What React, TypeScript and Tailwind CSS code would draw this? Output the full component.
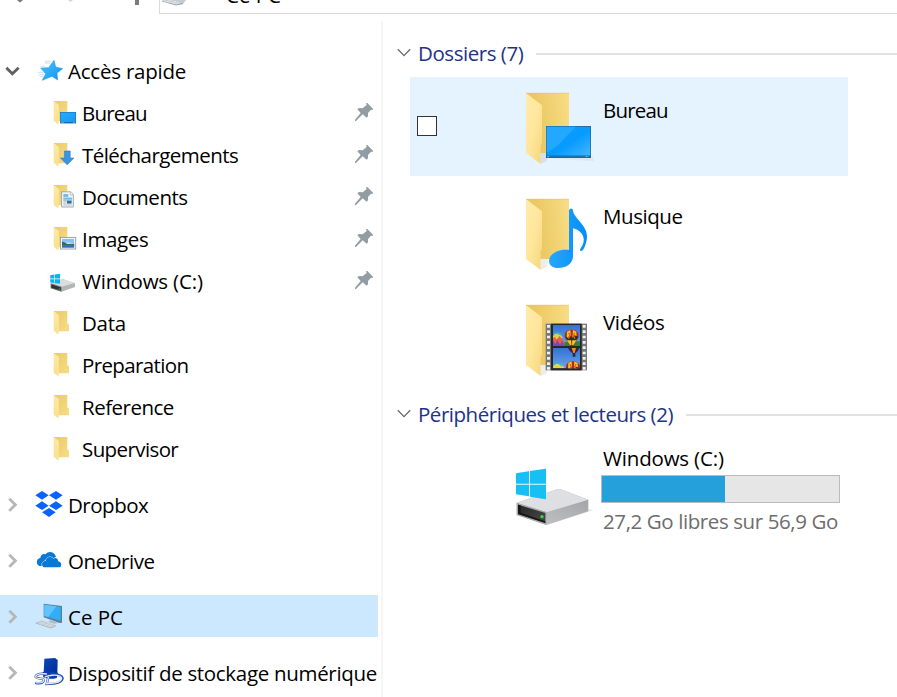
import type { ReactNode } from "react";

function ChevronRight() {
  return (
    <svg className="h-5 w-5 shrink-0" viewBox="9 46 60 60" fill="none">
      <path d="M28 60 46 78 28 96" stroke="#b6b6b6" strokeWidth="8.5" />
    </svg>
  );
}

function ChevronDown() {
  return (
    <svg className="h-5 w-5 shrink-0" viewBox="9 180 60 60" fill="none">
      <path d="M19 203 37 221 56 203" stroke="#606060" strokeWidth="8.5" />
    </svg>
  );
}

function Pin() {
  return (
    <svg className="h-5 w-5 shrink-0" viewBox="42 246 60 60" fill="#919ca3">
      <path d="M78 250 82 249 99 266 98 270 93 269 84 279 84 289 80 293 68 283 48 303 45 303 45 299 62 279 52 268 57 264 68 265 80 255Z" />
    </svg>
  );
}

function SmallFolder({ children }: { children?: ReactNode }) {
  return (
    <svg className="h-7 w-7 shrink-0" viewBox="0 0 28 28">
      <defs>
        <linearGradient id="sb" x1="0" y1="0" x2="1" y2="1">
          <stop offset="0" stopColor="#eaca69" />
          <stop offset="1" stopColor="#f8dc85" />
        </linearGradient>
        <linearGradient id="sf" x1="0" y1="0" x2="0" y2="1">
          <stop offset="0" stopColor="#fee9a5" />
          <stop offset="1" stopColor="#fadf8c" />
        </linearGradient>
        <linearGradient id="sky" x1="0" y1="0" x2="1" y2="1">
          <stop offset="0" stopColor="#29aafc" />
          <stop offset="1" stopColor="#159bf5" />
        </linearGradient>
      </defs>
      <path d={children ? "M3.7 3H17.3V23.3H7Z" : "M3.7 3H17.3V15.3L19 16.5V23.3H7Z"} fill="url(#sb)" />
      <path d="M3.7 3 8.9 7V22L8.3 26.6 3.7 22.8Z" fill="url(#sf)" />
      {children}
    </svg>
  );
}

const desktopGlyph = (
  <g>
    <rect x="10" y="14" width="16" height="11.4" fill="#1868a4" />
    <rect x="10.5" y="14.5" width="15" height="9.5" fill="url(#sky)" />
    <path d="M11 24.6H14M23 24.6H25" stroke="#8ed1ff" strokeWidth=".5" />
  </g>
);

const downloadGlyph = (
  <path d="M14.4 11H20.2V18H23.9L17.2 24.8 10.5 18H14.4Z" fill="#3994e4" stroke="#2a7cc9" strokeWidth=".6" />
);

const documentGlyph = (
  <g>
    <path d="M11.6 9.8H20.5L23.3 12.5V25H11.6Z" fill="#f5f8fa" stroke="#8c969c" strokeWidth=".8" />
    <path d="M20.3 9.8V12.8H23.3" fill="#fff" stroke="#8c969c" strokeWidth=".6" />
    <rect x="13.3" y="12" width="5" height="3" fill="#70bcec" />
    <path d="M13.3 16.2H22M13.3 18H22" stroke="#3d9cd9" strokeWidth="1" />
    <rect x="17" y="18.8" width="4.6" height="2.8" fill="#376b8f" />
    <path d="M13.3 19.7H16.4M13.3 21.2H16.4M13.3 23H21.8" stroke="#9aa5aa" strokeWidth=".7" />
  </g>
);

const imageGlyph = (
  <g>
    <rect x="10.5" y="13.4" width="15.2" height="11.6" fill="#fff" stroke="#949a9f" strokeWidth=".9" />
    <rect x="12" y="14.8" width="12.2" height="8.8" fill="#8bc1f4" />
    <path d="M12 19Q17 18 24.2 19.5V21.3H12Z" fill="#d2e9fb" />
    <path d="M12 17.6Q15 18.3 17.5 20L24.2 19.8V21.8H12Z" fill="#356c55" />
    <rect x="12" y="21.4" width="12.2" height="2.2" fill="#2a70b8" />
  </g>
);

function SmallDrive() {
  return (
    <svg className="h-7 w-7 shrink-0" viewBox="0 0 28 28">
      <path d="M.7 17.5 12.5 13 25 17.3V21L11.5 25.8.7 22.3Z" fill="#b4b5b8" />
      <path d="M.7 17.3 12.5 13 25 17 11.5 20.8Z" fill="#dcdde0" />
      <path d="M.7 17.3 11.5 20.8V25.8L.7 22.3Z" fill="#777" />
      <path d="M1.4 18.6 10.8 21.6V24.5L1.4 21.8Z" fill="#303030" />
      <circle cx="9.2" cy="23" r=".7" fill="#35c23a" />
      <path d="M.2 9.2 4.4 8.6V12.6H.2ZM5 8.5 10 7.8V12.6H5ZM.2 13.2H4.4V17.1L.2 16.5ZM5 13.2H10V17.8L5 17.2Z" fill="#00b7f1" />
    </svg>
  );
}

function Star() {
  return (
    <svg className="h-[30px] w-[30px] shrink-0" viewBox="102 165 90 90">
      <defs>
        <linearGradient id="st" x1="0" y1="0" x2="1" y2="1">
          <stop offset="0" stopColor="#52c0f8" />
          <stop offset="1" stopColor="#0996f5" />
        </linearGradient>
      </defs>
      <path d="M134 184H154M134 189H150M113 218H134M116 224H132M119 229H130M122 199H134" stroke="#a5d6f5" strokeWidth="2" />
      <path d="M162 181 167 201 188 206 171 219 173 240 156 229 127 241 137 221 122 204 146 203Z" fill="url(#st)" stroke="#168fdc" strokeWidth="1.5" />
    </svg>
  );
}

function Dropbox() {
  return (
    <svg className="h-[30px] w-[30px] shrink-0" viewBox="102 27 90 90" fill="#0864fb">
      <path d="M126 33 146 46 126 59 106 46ZM168 33 188 46 168 59 147 46ZM126 64 146 77 126 90 106 77ZM168 64 188 77 168 90 147 77ZM147 84 167 97 147 111 126 97Z" />
    </svg>
  );
}

function OneDrive() {
  return (
    <svg className="h-[30px] w-[30px] shrink-0" viewBox="102 195 90 90" fill="#0878d6">
      <path d="M122 258C113 258 109 250 111 243 112 238 116 235 121 234 121 226 129 220 137 223 143 214 158 213 165 224L168 230 145 250Z" />
      <path d="M134 262C126 262 124 251 129 246 131 243 134 243 137 243 138 233 151 226 160 236 168 231 175 237 174 244 183 245 186 253 182 260L178 262Z" stroke="#fff" strokeWidth="3" paintOrder="stroke" />
    </svg>
  );
}

function Computer() {
  return (
    <svg className="h-[30px] w-[30px] shrink-0" viewBox="102 63 90 90">
      <path d="M131 71 186 78V128L179 129 131 112Z" fill="#5c7f99" />
      <path d="M133 74 182 81V122L133 108Z" fill="#30aefa" />
      <path d="M133 74 169 79 145 111 133 108Z" fill="#62c3fc" />
      <path d="M150 121 166 125 176 129 162 131 145 125Z" fill="#aeb9c1" />
      <path d="M106 128 125 121 168 136 153 144Z" fill="#c2c9ce" />
      <path d="M107 129 153 144 168 137" fill="none" stroke="#94a0a8" strokeWidth="2" />
      <path d="M113 129 155 142M119 126 160 139M121 134 135 125M133 138 147 129M145 141 158 132" stroke="#eef3f6" strokeWidth="1" />
    </svg>
  );
}

function StorageDevice() {
  return (
    <svg className="h-[30px] w-[30px] shrink-0" viewBox="102 231 90 90">
      <defs>
        <linearGradient id="sd" x1="0" y1="0" x2="1" y2="1">
          <stop offset="0" stopColor="#0b47b6" />
          <stop offset="1" stopColor="#03299a" />
        </linearGradient>
      </defs>
      <path d="M133 236 165 234 173 240 172 280 157 284 131 278Z" fill="url(#sd)" />
      <path d="M128 276Q149 270 175 279L170 294Q151 300 130 292Z" fill="#0b3eaa" />
      <g fill="none" strokeLinecap="round">
        <path d="M139 282C119 278 103 285 108 292 114 299 133 292 131 302 129 311 115 310 108 309M145 292 140 312 161 311C184 309 196 294 181 287 168 281 145 284 135 291" stroke="#214eaf" strokeWidth="7" />
        <path d="M139 282C119 278 103 285 108 292 114 299 133 292 131 302 129 309 115 309 108 308M145 292 140 311 161 309C182 307 192 294 179 288 168 283 145 286 135 291" stroke="#e5edf8" strokeWidth="4" />
      </g>
    </svg>
  );
}

function LargeFolder({ children }: { children: ReactNode }) {
  return (
    <svg className="h-[76px] w-[76px] shrink-0" viewBox="45 30 228 228">
      <defs>
        <linearGradient id="lb" x1="0" y1="0.2" x2="1" y2="0">
          <stop offset="0.2" stopColor="#eac862" />
          <stop offset="1" stopColor="#f9dd86" />
        </linearGradient>
        <linearGradient id="lf" x1="0" y1="0" x2="1" y2="1">
          <stop offset="0" stopColor="#ffebac" />
          <stop offset="0.5" stopColor="#ffe69b" />
          <stop offset="1" stopColor="#f4d67d" />
        </linearGradient>
        <linearGradient id="screen" x1="0" y1="0" x2="1" y2="1">
          <stop offset="0" stopColor="#0e9cff" />
          <stop offset="0.55" stopColor="#079bff" />
          <stop offset="1" stopColor="#42b7ff" />
        </linearGradient>
        <linearGradient id="note" x1="0" y1="0" x2="1" y2="0">
          <stop offset="0" stopColor="#27a7fc" />
          <stop offset="1" stopColor="#008ff8" />
        </linearGradient>
        <linearGradient id="frame" x1="0" y1="0" x2="0" y2="1">
          <stop offset="0" stopColor="#3372d5" />
          <stop offset="1" stopColor="#6ba3ec" />
        </linearGradient>
      </defs>
      <path d="M106 252 125 244 130 219H107Z" fill="#000" opacity=".07" />
      <path d="M63 39H192V219H100Z" fill="url(#lb)" />
      <path d="M63 39 111 76V188L107 197V252L63 219Z" fill="url(#lf)" />
      <path d="M63 39.5H192" stroke="#dfbd60" strokeWidth="1.5" />
      {children}
    </svg>
  );
}

const bigScreen = (
  <g>
    <path d="M132 235H258L266 227V244Z" fill="#000" opacity=".04" />
    <rect x="123" y="138" width="135" height="96" fill="#245f88" />
    <rect x="125" y="140" width="131" height="87" fill="url(#screen)" />
    <path d="M125 140H212L157 197 125 218Z" fill="#22a9ff" />
    <rect x="125" y="227" width="131" height="5" fill="#1577b5" />
    <path d="M127 230H132M242 230H246M248 230H250" stroke="#b8e2ff" strokeWidth="2" />
  </g>
);

const bigNote = (
  <g>
    <path d="M192 72Q197 64 203 70C205 98 246 116 246 151 246 169 237 193 230 195 224 197 224 190 228 185 245 160 235 135 204 127V213C202 235 181 246 160 246 142 246 132 237 132 224 133 202 163 187 192 192Z" fill="url(#note)" />
    <path d="M193 192Q197 193 193 198" fill="none" stroke="#0077da" strokeWidth="2" />
  </g>
);

function Balloon({ x, y }: { x: number; y: number }) {
  return (
    <g transform={`translate(${x} ${y})`}>
      <path d="M-21 16C-21-6 21-6 21 16 21 30 8 39 5 45H-5C-8 39-21 30-21 16Z" fill="#b72a20" />
      <path d="M-14 5-4 0-1 45-5 45-15 30ZM4 0 14 5 15 30 5 45 1 45Z" fill="#f1c72f" />
      <path d="M-20 17-12 23-5 16 2 23 9 16 20 20 14 31-14 31Z" fill="#322d29" />
      <path d="M-9 8-5 17-10 26M9 8 5 17 10 26" fill="none" stroke="#e85f23" strokeWidth="4" />
      <path d="M-5 46H5V52H-5Z" fill="#693721" />
    </g>
  );
}

const filmHoles = [99, 115, 131, 147, 163, 179, 195, 211, 225];

const bigFilm = (
  <g>
    <rect x="122" y="95" width="124" height="140" fill="#787878" />
    <rect x="138" y="95" width="92" height="140" fill="#272727" />
    {filmHoles.map((y) => (
      <g key={y} fill="#f1f1f1">
        <rect x="126" y={y} width="9" height="8" rx="1" />
        <rect x="233" y={y} width="9" height="8" rx="1" />
      </g>
    ))}
    <svg x="144" y="99" width="81" height="63" viewBox="144 99 81 63">
      <rect x="144" y="99" width="81" height="63" fill="url(#frame)" />
      <path d="M144 132Q153 118 165 124L174 138 144 143Z" fill="#d7d34b" />
      <path d="M147 126Q157 119 168 129" fill="none" stroke="#39aeca" strokeWidth="4" />
      <path d="M144 139 149 134 155 143 164 132 178 151 182 162H144Z" fill="#e65b52" />
      <path d="M144 146 151 156 157 144 165 158 172 146 178 162H144Z" fill="#7a48b4" />
      <path d="M178 151 225 148V162H178Z" fill="#367d35" />
      <Balloon x={200} y={114} />
    </svg>
    <svg x="144" y="168" width="81" height="61" viewBox="144 168 81 61">
      <rect x="144" y="168" width="81" height="61" fill="url(#frame)" />
      <path d="M189 168H223Q218 181 211 184V194H203V184Q194 179 189 168Z" fill="#32243d" />
      <path d="M200 168H213L209 183H205Z" fill="#e59029" />
      <path d="M144 225Q151 208 169 216L179 229H144Z" fill="#ded64e" />
      <path d="M148 217Q159 208 171 222" fill="none" stroke="#35b6c8" strokeWidth="4" />
      <Balloon x={204} y={208} />
    </svg>
  </g>
);

function LargeDrive() {
  return (
    <svg className="h-[65px] w-[85px] shrink-0" viewBox="30 75 255 195">
      <defs>
        <linearGradient id="side" x1="0" y1="1" x2="1" y2="0">
          <stop offset="0" stopColor="#c8c9cb" />
          <stop offset="1" stopColor="#9d9ea1" />
        </linearGradient>
        <linearGradient id="slot" x1="0" y1="0" x2="1" y2="1">
          <stop offset="0" stopColor="#252525" />
          <stop offset="1" stopColor="#4a4a4a" />
        </linearGradient>
      </defs>
      <path d="M261 206 281 210 265 216 139 255Z" fill="#000" opacity=".08" />
      <path d="M50 188 174 147 180 147 265 179V214L140 255 50 225Z" fill="url(#side)" />
      <path d="M50 188 174 147 180 147 265 179 139 217Z" fill="#dddfe2" />
      <path d="M50 188 139 216V255L50 225Z" fill="#a6a7a8" />
      <path d="M54 194 136 219V249L54 222Z" fill="url(#slot)" />
      <path d="M54 222 136 249V244L62 218V196L54 194Z" fill="#171717" />
      <circle cx="126" cy="230" r="5" fill="#32db38" />
      <path d="M48 100 87 94V131H48ZM90 93 138 86V131H90ZM48 134H87V169L48 163ZM90 134H138V178L90 170Z" fill="#00b9f2" />
      <path d="M48 100 138 86V178L48 163Z" fill="#7edfff" opacity=".18" />
    </svg>
  );
}

type NavItem = { label: string; tracking: string; icon: ReactNode; pinned?: boolean };

const quickItems: NavItem[] = [
  { label: "Bureau", tracking: "tracking-[-0.8px]", icon: <SmallFolder>{desktopGlyph}</SmallFolder>, pinned: true },
  { label: "Téléchargements", tracking: "tracking-[-0.55px]", icon: <SmallFolder>{downloadGlyph}</SmallFolder>, pinned: true },
  { label: "Documents", tracking: "tracking-[-0.45px]", icon: <SmallFolder>{documentGlyph}</SmallFolder>, pinned: true },
  { label: "Images", tracking: "tracking-[-0.35px]", icon: <SmallFolder>{imageGlyph}</SmallFolder>, pinned: true },
  { label: "Windows (C:)", tracking: "tracking-[-0.18px]", icon: <SmallDrive />, pinned: true },
  { label: "Data", tracking: "tracking-[-0.25px]", icon: <SmallFolder /> },
  { label: "Preparation", tracking: "tracking-[-0.62px]", icon: <SmallFolder /> },
  { label: "Reference", tracking: "tracking-[-0.5px]", icon: <SmallFolder /> },
  { label: "Supervisor", tracking: "tracking-[-0.6px]", icon: <SmallFolder /> },
];

function QuickRow({ label, tracking, icon, pinned }: NavItem) {
  return (
    <div className="flex h-[42px] items-center pr-1 pl-[50px]">
      {icon}
      <span className={`ml-1 pt-px ${tracking}`}>{label}</span>
      {pinned && <span className="ml-auto"><Pin /></span>}
    </div>
  );
}

function RootRow({ label, tracking, icon, open, selected }: NavItem & { open?: boolean; selected?: boolean }) {
  return (
    <div className={`flex h-[42px] items-center pl-[3px] ${selected ? "bg-[#cce8ff]" : ""}`}>
      {open ? <ChevronDown /> : <ChevronRight />}
      <span className="ml-[11px]">{icon}</span>
      <span className={`ml-1 pt-px ${tracking}`}>{label}</span>
    </div>
  );
}

function GroupHeader({ title, tracking }: { title: string; tracking: string }) {
  return (
    <div className="flex h-[34px] items-center pl-[14px]">
      <svg className="mb-1 h-[9px] w-[14px] shrink-0" viewBox="0 0 14 9" fill="none">
        <path d="M.8 1.2 7 7.6 13.2 1.2" stroke="#686868" strokeWidth="1.3" />
      </svg>
      <span className={`-mt-[2px] ml-[7px] text-[#1e3287] ${tracking}`}>{title}</span>
      <div className="ml-[13px] h-[2px] flex-1 bg-[#e2e2e2]" />
    </div>
  );
}

function FolderTile({ label, tracking, art, selected }: { label: string; tracking: string; art: ReactNode; selected?: boolean }) {
  return (
    <div className={`flex h-[99px] w-[438px] pt-[13px] pl-[7px] ${selected ? "bg-[#e5f3ff]" : ""}`}>
      <div className={`mt-[26px] mr-[83px] h-5 w-5 ${selected ? "border border-[#333] bg-white" : ""}`} />
      <LargeFolder>{art}</LargeFolder>
      <span className={`ml-[7px] pt-[6px] ${tracking}`}>{label}</span>
    </div>
  );
}

export default function App() {
  return (
    <div className="h-[697px] w-[897px] overflow-hidden bg-white font-['Open_Sans','Noto_Sans',sans-serif] text-[20.5px] leading-7 whitespace-nowrap text-black">
      <header className="flex h-[21px] overflow-hidden">
        <svg className="h-[14px] w-[159px] shrink-0" viewBox="0 0 159 14">
          <path d="M17 0H23L20 2.5Z" fill="#777" />
          <path d="M68 0H73L70.5 2Z" fill="#d5d5d5" />
          <rect x="135" width="4" height="5" fill="#7b7b7b" />
        </svg>
        <div className="flex h-[14px] flex-1 overflow-hidden border-b border-l border-[#d9d9d9]">
          <svg className="h-[8px] w-[32px] shrink-0" viewBox="0 0 32 8">
            <path d="M2 0H26L23 4 16 5Z" fill="#c4cbd1" />
            <path d="M2 1 16 5 23 3.5" stroke="#9ba5ab" fill="none" />
            <path d="M4 1 18 4M9 0 20 3M7 2 10 0M13 3 16 1" stroke="#eee" strokeWidth=".6" />
          </svg>
          <span className="-mt-[19px] ml-[34px]">Ce PC</span>
        </div>
      </header>
      <div className="flex h-[676px]">
        <nav className="w-[378px] shrink-0 pt-7">
          <RootRow label="Accès rapide" tracking="tracking-[-0.22px]" icon={<Star />} open />
          {quickItems.map((item) => <QuickRow key={item.label} {...item} />)}
          <div className="mt-[14px] flex flex-col gap-[14px]">
            <RootRow label="Dropbox" tracking="tracking-[-0.5px]" icon={<Dropbox />} />
            <RootRow label="OneDrive" tracking="tracking-[-0.45px]" icon={<OneDrive />} />
            <RootRow label="Ce PC" tracking="tracking-normal" icon={<Computer />} selected />
            <RootRow label="Dispositif de stockage numérique" tracking="tracking-[-0.31px]" icon={<StorageDevice />} />
          </div>
        </nav>
        <main className="ml-[3px] flex-1 border-l-2 border-[#f6f6f6] pt-4">
          <GroupHeader title="Dossiers (7)" tracking="tracking-[-0.45px]" />
          <div className="mt-[6px] ml-[27px] flex flex-col gap-[7px]">
            <FolderTile label="Bureau" tracking="tracking-[-0.8px]" art={bigScreen} selected />
            <FolderTile label="Musique" tracking="tracking-[-0.43px]" art={bigNote} />
            <FolderTile label="Vidéos" tracking="tracking-[-0.35px]" art={bigFilm} />
          </div>
          <div className="mt-[10px]">
            <GroupHeader title="Périphériques et lecteurs (2)" tracking="tracking-[-0.47px]" />
          </div>
          <div className="mt-[12px] flex pl-[127px]">
            <div className="pt-[21px]"><LargeDrive /></div>
            <div className="ml-[6px] flex flex-col">
              <span className="ml-[2px] tracking-[-0.18px]">Windows (C:)</span>
              <div className="mt-[3px] h-7 w-[239px] border border-[#bcbcbc] bg-[#e6e6e6]">
                <div className="h-full w-[123px] bg-[#26a0da]" />
              </div>
              <span className="mt-1 ml-[2px] tracking-[-0.4px] text-[#6d6d6d]">27,2 Go libres sur 56,9 Go</span>
            </div>
          </div>
        </main>
      </div>
    </div>
  );
}
